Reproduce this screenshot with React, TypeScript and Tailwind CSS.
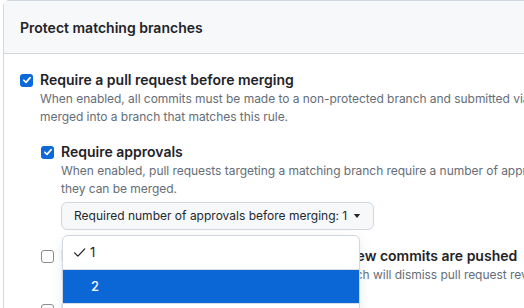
import React from 'react';

const font = { fontFamily: 'Inter, "Liberation Sans", sans-serif' };

const Box: React.FC<{ checked?: boolean }> = ({ checked }) =>
  checked ? (
    <span className="flex h-[13px] w-[13px] shrink-0 items-center justify-center rounded-[3px] bg-[#0b69d9]">
      <svg viewBox="0 0 12 12" className="h-[10px] w-[10px]" fill="none">
        <path d="M2.2 6.3 4.8 8.8 9.8 3.2" stroke="#fff" strokeWidth="2" strokeLinecap="round" strokeLinejoin="round" />
      </svg>
    </span>
  ) : (
    <span className="block h-[13px] w-[13px] shrink-0 rounded-[3px] border border-[#8c8c8c] bg-white" />
  );

interface RuleProps {
  checked?: boolean;
  title: string;
  note: string;
  children?: React.ReactNode;
}

const Rule: React.FC<RuleProps> = ({ checked, title, note, children }) => (
  <div className="flex">
    <div className="w-[20px] shrink-0 pt-[3.5px]">
      <Box checked={checked} />
    </div>
    <div className="min-w-0 flex-1">
      <div className="text-[14px] font-semibold leading-[20px] text-[#1f2328] whitespace-nowrap">{title}</div>
      <div className="text-[12px] leading-[18px] tracking-[-0.04px] text-[#656d76] whitespace-pre">{note}</div>
      {children}
    </div>
  </div>
);

export default function App() {
  return (
    <div className="h-[308px] w-[524px] overflow-hidden bg-white pl-[3px]" style={font}>
      <div className="w-[700px] rounded-md border border-[#d0d7de]">
        <div className="flex h-[53px] items-center border-b border-[#d0d7de] bg-[#f6f8fa] px-4">
          <h2 className="text-[14px] font-semibold text-[#1f2328]">Protect matching branches</h2>
        </div>
        <div className="px-4 pt-4">
          <Rule
            checked
            title="Require a pull request before merging"
            note={'When enabled, all commits must be made to a non-protected branch and submitted via a pull request before they can be\nmerged into a branch that matches this rule.'}
          >
            <div className="mt-4 flex flex-col gap-4 pl-px">
              <Rule
                checked
                title="Require approvals"
                note={'When enabled, pull requests targeting a matching branch require a number of approvals and no changes requested before\nthey can be merged.'}
              >
                <div className="relative mt-1">
                  <button className="flex h-[28px] items-center gap-[6px] rounded-md border border-[#d0d7de] bg-[#f6f8fa] px-3 text-[12px] text-[#24292f]">
                    <span>Required number of approvals before merging: 1</span>
                    <svg viewBox="0 0 8 5" className="h-[4px] w-[8px]" fill="#24292f">
                      <path d="M0 0h8L4 5z" />
                    </svg>
                  </button>
                  <div className="absolute left-px top-[33px] z-10 w-[298px] overflow-hidden rounded-md border border-[#d0d7de] bg-white shadow-[0_4px_12px_rgba(140,149,159,0.2)]">
                    <div className="flex h-[34px] items-center border-b border-[#d8dee4] pl-[10px] text-[13px] text-[#1f2328]">
                      <svg viewBox="0 0 16 16" className="mr-[4px] h-[13px] w-[13px]" fill="none">
                        <path d="M2 8.5 6 12.5 14.5 3.5" stroke="#1f2328" strokeWidth="1.5" strokeLinecap="round" strokeLinejoin="round" />
                      </svg>
                      <span>1</span>
                    </div>
                    <div className="flex h-[34px] items-center border-b border-[#d8dee4] bg-[#0b66d6] pl-[28px] text-[13px] font-medium text-white">
                      2
                    </div>
                    <div className="flex h-[34px] items-center pl-[28px] text-[13px] text-[#1f2328]">3</div>
                  </div>
                </div>
              </Rule>
              <Rule
                title="Dismiss stale pull request approvals when new commits are pushed"
                note="New reviewable commits pushed to a matching branch will dismiss pull request review approvals."
              />
              <Rule
                title="Require review from Code Owners"
                note="Require an approved review in pull requests including files with a designated code owner."
              />
            </div>
          </Rule>
        </div>
      </div>
    </div>
  );
}
